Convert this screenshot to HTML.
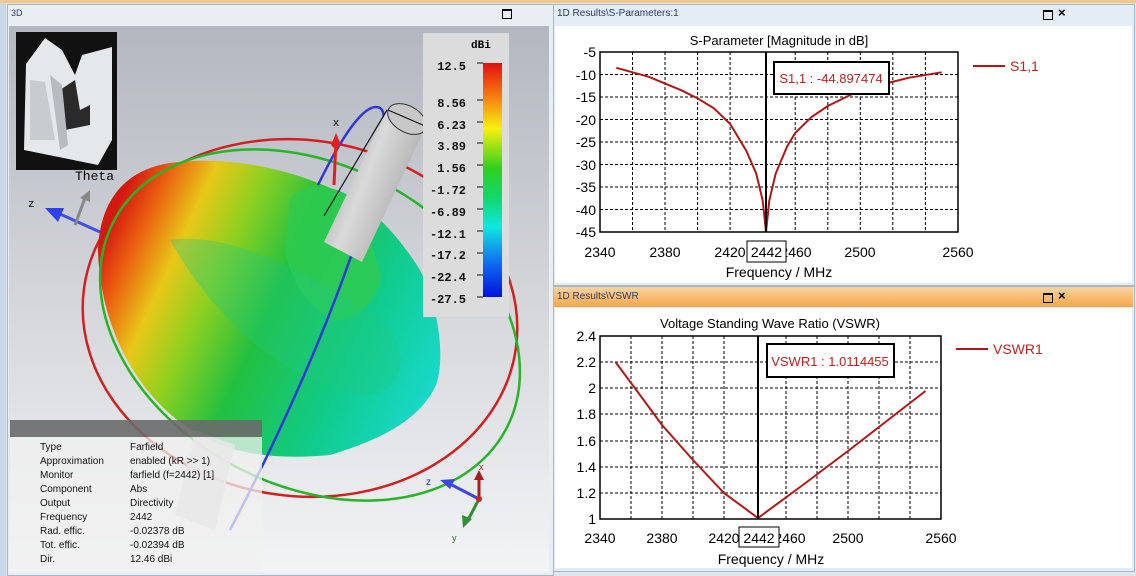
<!DOCTYPE html>
<html><head><meta charset="utf-8"><style>
body{margin:0;width:1136px;height:576px;overflow:hidden;background:#dfe6ee;font-family:"Liberation Sans",sans-serif;position:relative}
.a{position:absolute}
</style></head><body>
<div class="a" style="left:0;top:0;width:1136px;height:3px;background:#f2c98a"></div>
<div class="a" style="left:0;top:3px;width:6px;height:573px;background:#c9d8ea"></div>
<!-- 3D panel -->
<div class="a" style="left:7px;top:4px;width:545px;height:570px;background:#e9eef4;border:1px solid #a9b6c6"></div>
<div class="a" style="left:11px;top:8px;font-size:9px;color:#2a3c6a">3D</div>
<div class="a" style="left:502px;top:9px;width:8px;height:7px;border:1px solid #000;border-top-width:2px"></div>
<svg class="a" style="left:9px;top:26px" width="540" height="546" viewBox="9 26 540 546">
<defs>
<linearGradient id="bg" x1="0" y1="0" x2="0" y2="1"><stop offset="0" stop-color="#b3b7c0"/><stop offset="0.5" stop-color="#d4d6da"/><stop offset="1" stop-color="#f3f4f6"/></linearGradient>
<linearGradient id="blob" x1="0" y1="0.3" x2="1" y2="0.7"><stop offset="0" stop-color="#d41a10"/><stop offset="0.08" stop-color="#ea5a10"/><stop offset="0.2" stop-color="#e8c818"/><stop offset="0.33" stop-color="#8ed020"/><stop offset="0.5" stop-color="#22c040"/><stop offset="0.78" stop-color="#10cc90"/><stop offset="1" stop-color="#18d8c8"/></linearGradient>
<linearGradient id="cb" x1="0" y1="0" x2="0" y2="1"><stop offset="0" stop-color="#e01010"/><stop offset="0.12" stop-color="#f46a10"/><stop offset="0.28" stop-color="#f8f010"/><stop offset="0.45" stop-color="#30d020"/><stop offset="0.58" stop-color="#10d870"/><stop offset="0.7" stop-color="#10e8e0"/><stop offset="0.85" stop-color="#1070f0"/><stop offset="1" stop-color="#0010e0"/></linearGradient>
<linearGradient id="cyl" x1="0" y1="0" x2="1" y2="0.6"><stop offset="0" stop-color="#8c8c8c"/><stop offset="0.5" stop-color="#dadada"/><stop offset="1" stop-color="#a0a0a0"/></linearGradient>
</defs>
<rect x="9" y="26" width="540" height="546" fill="url(#bg)"/>
<!-- photo -->
<rect x="16" y="32" width="101" height="138" fill="#111"/>
<path d="M26 64 L45 38 L62 50 L75 75 L82 55 L112 47 L112 140 L98 165 L24 150 Z" fill="#e4e8ea"/>
<path d="M30 80 L45 82 L55 140 L30 140 Z" fill="#c8ccd0"/>
<path d="M60 90 L75 80 L80 110 L90 105 L90 125 L65 130 Z" fill="#2a2a2a"/>
<path d="M50 75 L62 85 L68 145 L60 150 Z" fill="#b8bcc0"/>
<ellipse cx="300" cy="318" rx="218" ry="178" fill="none" stroke="#d02020" stroke-width="2.5" transform="rotate(8 300 318)"/>
<!-- blob -->
<path d="M98 250 C100 200 125 170 170 163 C230 155 290 170 330 188 C360 195 395 230 420 270 C440 310 445 360 436 385 C420 420 380 440 330 455 C280 460 230 455 195 432 C140 400 100 330 98 250 Z" fill="url(#blob)"/>
<path d="M290 200 C300 185 330 180 350 200 C365 215 372 250 380 270 C385 290 360 320 340 320 C310 315 290 280 285 250 Z" fill="#2ecb50" opacity="0.8"/>
<path d="M170 240 C230 230 330 280 390 330 C410 360 400 390 370 395 C300 390 220 330 170 240 Z" fill="#20c880" opacity="0.35"/>
<ellipse cx="310" cy="325" rx="222" ry="160" fill="none" stroke="#28b428" stroke-width="2.5" transform="rotate(28 310 325)"/>
<path d="M318 185 C340 140 365 100 380 108 C400 120 350 300 230 530" fill="none" stroke="#3038d8" stroke-width="2.5"/>
<!-- cylinder -->
<path d="M387 110 L425 128 L362 262 L324 242 Z" fill="url(#cyl)"/>
<line x1="387" y1="110" x2="324" y2="216" stroke="#111" stroke-width="1.2"/>
<ellipse cx="407" cy="119" rx="21" ry="13" fill="#c8c8c8" stroke="#333" transform="rotate(30 407 119)"/>
<line x1="388" y1="110" x2="425" y2="126" stroke="#111" stroke-width="1.2"/>
<path d="M195 430 L235 445 L215 530 L175 515 Z" fill="#cfcfcf" opacity="0.85"/>
<line x1="334" y1="185" x2="336" y2="140" stroke="#e02020" stroke-width="3"/>
<path d="M336 133 L341 145 L336 150 L331 145 Z" fill="#e02020"/>
<text x="336" y="126" font-size="11" font-family="Liberation Mono,monospace" text-anchor="middle">x</text>
<line x1="100" y1="232" x2="60" y2="214" stroke="#4050e8" stroke-width="3"/>
<path d="M45 208 L64 208 L58 222 Z" fill="#3040f0"/>
<text x="28" y="207" font-size="11" font-family="Liberation Mono,monospace">z</text>
<line x1="75" y1="225" x2="85" y2="198" stroke="#888" stroke-width="3"/>
<path d="M80 198 L90 190 L90 202 Z" fill="#888"/>
<text x="75" y="180" font-size="13" font-family="Liberation Mono,monospace">Theta</text>
<!-- colorbar -->
<rect x="423" y="33" width="86" height="284" fill="#dcdcdc"/>
<text x="471" y="48" font-size="11" font-family="Liberation Mono,monospace" font-weight="bold">dBi</text>
<rect x="483" y="63" width="19" height="234" fill="url(#cb)"/>
<g font-size="12" font-family="Liberation Mono,monospace" font-weight="bold" text-anchor="end" fill="#111">
<text x="466" y="70">12.5</text><text x="466" y="107">8.56</text><text x="466" y="129">6.23</text><text x="466" y="150">3.89</text><text x="466" y="172">1.56</text><text x="466" y="194">-1.72</text><text x="466" y="216">-6.89</text><text x="466" y="238">-12.1</text><text x="466" y="259">-17.2</text><text x="466" y="281">-22.4</text><text x="466" y="303">-27.5</text>
</g>
<g stroke="#111"><line x1="477" y1="63" x2="483" y2="63"/><line x1="477" y1="100" x2="483" y2="100"/><line x1="477" y1="122" x2="483" y2="122"/><line x1="477" y1="143" x2="483" y2="143"/><line x1="477" y1="165" x2="483" y2="165"/><line x1="477" y1="187" x2="483" y2="187"/><line x1="477" y1="209" x2="483" y2="209"/><line x1="477" y1="231" x2="483" y2="231"/><line x1="477" y1="253" x2="483" y2="253"/><line x1="477" y1="275" x2="483" y2="275"/><line x1="477" y1="297" x2="483" y2="297"/></g>
<!-- info box -->
<rect x="10" y="420" width="252" height="17" fill="#6a6a6a" opacity="0.9"/>
<rect x="10" y="437" width="252" height="133" fill="#f0f0f0" opacity="0.75"/>
<g font-size="10" fill="#111">
<text x="40" y="450">Type</text><text x="130" y="450">Farfield</text>
<text x="40" y="464">Approximation</text><text x="130" y="464">enabled (kR &gt;&gt; 1)</text>
<text x="40" y="478">Monitor</text><text x="130" y="478">farfield (f=2442) [1]</text>
<text x="40" y="492">Component</text><text x="130" y="492">Abs</text>
<text x="40" y="506">Output</text><text x="130" y="506">Directivity</text>
<text x="40" y="520">Frequency</text><text x="130" y="520">2442</text>
<text x="40" y="534">Rad. effic.</text><text x="130" y="534">-0.02378 dB</text>
<text x="40" y="548">Tot. effic.</text><text x="130" y="548">-0.02394 dB</text>
<text x="40" y="562">Dir.</text><text x="130" y="562">12.46 dBi</text>
</g>
<line x1="479" y1="499" x2="450" y2="484" stroke="#3a48e0" stroke-width="3"/>
<path d="M440 480 L455 479 L450 489 Z" fill="#3a48e0"/>
<line x1="479" y1="499" x2="479" y2="478" stroke="#a02020" stroke-width="3"/>
<path d="M479 470 L484 480 L474 480 Z" fill="#a02020"/>
<line x1="479" y1="499" x2="468" y2="520" stroke="#309030" stroke-width="3"/>
<path d="M463 528 L462 515 L472 519 Z" fill="#309030"/>
<circle cx="479" cy="499" r="3" fill="#d02020"/>
<text x="479" y="470" font-size="9" fill="#c02020">x</text>
<text x="426" y="485" font-size="10" fill="#2030b0">z</text>
<text x="452" y="541" font-size="9" fill="#207020">y</text>
</svg>
<!-- S-param panel -->
<div class="a" style="left:553px;top:4px;width:580px;height:280px;background:#e4ecf5;border:1px solid #a9b6c6"></div>
<div class="a" style="left:557px;top:8px;font-size:10px;color:#2a3c6a">1D Results\S-Parameters:1</div>
<div class="a" style="left:1043px;top:10px;width:8px;height:7px;border:1px solid #000;border-top-width:2px"></div>
<div class="a" style="left:1058px;top:5px;font-size:13px;font-weight:bold">×</div>
<svg class="a" style="left:555px;top:26px" width="577" height="257" viewBox="555 26 577 257">
<rect x="555" y="26" width="577" height="257" fill="#fff"/>
<text x="779" y="45" font-size="13" text-anchor="middle">S-Parameter [Magnitude in dB]</text>
<g stroke="#000" stroke-dasharray="3,2" stroke-width="1">
<line x1="632.5" y1="52" x2="632.5" y2="232"/><line x1="665" y1="52" x2="665" y2="232"/><line x1="697.6" y1="52" x2="697.6" y2="232"/><line x1="730.1" y1="52" x2="730.1" y2="232"/><line x1="795.2" y1="52" x2="795.2" y2="232"/><line x1="827.8" y1="52" x2="827.8" y2="232"/><line x1="860.3" y1="52" x2="860.3" y2="232"/><line x1="892.8" y1="52" x2="892.8" y2="232"/><line x1="925.4" y1="52" x2="925.4" y2="232"/>
<line x1="600" y1="74.5" x2="958" y2="74.5"/><line x1="600" y1="97" x2="958" y2="97"/><line x1="600" y1="119.5" x2="958" y2="119.5"/><line x1="600" y1="142" x2="958" y2="142"/><line x1="600" y1="164.5" x2="958" y2="164.5"/><line x1="600" y1="187" x2="958" y2="187"/><line x1="600" y1="209.5" x2="958" y2="209.5"/>
</g>
<rect x="600" y="52" width="358" height="180" fill="none" stroke="#000" stroke-width="1.5"/>
<g font-size="14" text-anchor="end">
<text x="596" y="57">-5</text><text x="596" y="80">-10</text><text x="596" y="102">-15</text><text x="596" y="125">-20</text><text x="596" y="147">-25</text><text x="596" y="170">-30</text><text x="596" y="192">-35</text><text x="596" y="215">-40</text><text x="596" y="237">-45</text>
</g>
<g font-size="14" text-anchor="middle">
<text x="600" y="257">2340</text><text x="665" y="257">2380</text><text x="730" y="257">2420</text><text x="796" y="257">2460</text><text x="860" y="257">2500</text><text x="958" y="257">2560</text>
<text x="779" y="277">Frequency / MHz</text>
</g>
<polyline fill="none" stroke="#b01818" stroke-width="2" points="616.3,67.8 648.8,76.8 681.4,90.3 697.6,98.4 713.9,108.3 730.2,124 746.4,151 756.2,173.5 762.7,200.5 766,232 769.3,200.5 775.7,173.5 787.1,146.5 795.2,133 811.5,117 827.8,106 852.2,94 876.6,85.8 909.1,77.7 941.7,72.3"/>
<line x1="766" y1="52" x2="766" y2="232" stroke="#000" stroke-width="2"/>
<rect x="747" y="241" width="39" height="21" fill="#fff" stroke="#000"/>
<text x="766.5" y="257" font-size="14" text-anchor="middle">2442</text>
<rect x="774" y="62" width="115" height="32" fill="#fff" stroke="#000" stroke-width="2"/>
<text x="831" y="83" font-size="13" text-anchor="middle" fill="#c02020">S1,1 : -44.897474</text>
<line x1="973" y1="66" x2="1005" y2="66" stroke="#b01818" stroke-width="2"/>
<text x="1010" y="71" font-size="14" fill="#c02020">S1,1</text>
</svg>
<!-- VSWR panel -->
<div class="a" style="left:553px;top:286px;width:580px;height:284px;background:#e4ecf5;border:1px solid #a9b6c6"></div>
<div class="a" style="left:554px;top:287px;width:579px;height:20px;background:linear-gradient(#fbd4a0,#f5a64a)"></div>
<div class="a" style="left:557px;top:291px;font-size:10px;color:#2a3c6a">1D Results\VSWR</div>
<div class="a" style="left:1043px;top:293px;width:8px;height:7px;border:1px solid #000;border-top-width:2px"></div>
<div class="a" style="left:1058px;top:288px;font-size:13px;font-weight:bold">×</div>
<svg class="a" style="left:555px;top:308px" width="577" height="260" viewBox="555 308 577 260">
<rect x="555" y="308" width="577" height="260" fill="#fff"/>
<text x="770" y="328" font-size="13" text-anchor="middle">Voltage Standing Wave Ratio (VSWR)</text>
<g stroke="#000" stroke-dasharray="3,2">
<line x1="631" y1="336" x2="631" y2="519"/><line x1="662" y1="336" x2="662" y2="519"/><line x1="693" y1="336" x2="693" y2="519"/><line x1="724" y1="336" x2="724" y2="519"/><line x1="786" y1="336" x2="786" y2="519"/><line x1="817" y1="336" x2="817" y2="519"/><line x1="848" y1="336" x2="848" y2="519"/><line x1="879" y1="336" x2="879" y2="519"/><line x1="910" y1="336" x2="910" y2="519"/>
<line x1="600" y1="362" x2="941" y2="362"/><line x1="600" y1="388" x2="941" y2="388"/><line x1="600" y1="414" x2="941" y2="414"/><line x1="600" y1="441" x2="941" y2="441"/><line x1="600" y1="467" x2="941" y2="467"/><line x1="600" y1="493" x2="941" y2="493"/>
</g>
<rect x="600" y="336" width="341" height="183" fill="none" stroke="#000" stroke-width="1.5"/>
<g font-size="14" text-anchor="end">
<text x="596" y="341">2.4</text><text x="596" y="367">2.2</text><text x="596" y="393">2</text><text x="596" y="419">1.8</text><text x="596" y="446">1.6</text><text x="596" y="472">1.4</text><text x="596" y="498">1.2</text><text x="596" y="524">1</text>
</g>
<g font-size="14" text-anchor="middle">
<text x="600" y="543">2340</text><text x="662" y="543">2380</text><text x="724" y="543">2420</text><text x="790" y="543">2460</text><text x="848" y="543">2500</text><text x="941" y="543">2560</text>
<text x="771" y="564">Frequency / MHz</text>
</g>
<polyline fill="none" stroke="#b01818" stroke-width="2" points="615.5,362 640,395 662,425 693,460 724,493 758,518 801.5,486 848,451 925.5,391"/>
<line x1="758" y1="336" x2="758" y2="519" stroke="#000" stroke-width="2"/>
<rect x="739" y="527" width="40" height="20" fill="#fff" stroke="#000"/>
<text x="759" y="543" font-size="14" text-anchor="middle">2442</text>
<rect x="767" y="344" width="127" height="33" fill="#fff" stroke="#000" stroke-width="2"/>
<text x="830" y="366" font-size="13" text-anchor="middle" fill="#c02020">VSWR1 : 1.0114455</text>
<line x1="956" y1="349" x2="988" y2="349" stroke="#b01818" stroke-width="2"/>
<text x="993" y="354" font-size="14" fill="#c02020">VSWR1</text>
</svg>
</body></html>
